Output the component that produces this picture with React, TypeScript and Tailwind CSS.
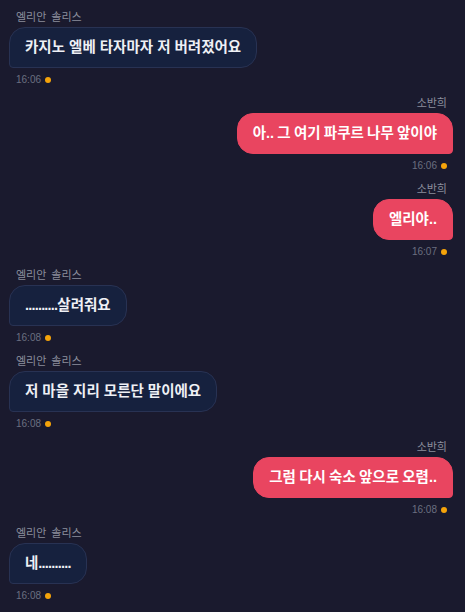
const messages = [
  { id: 1, mine: false, name: '엘리안  솔리스', text: '카지노 엘베 타자마자 저 버려졌어요', time: '16:06' },
  { id: 2, mine: true, name: '소반희', text: '아.. 그 여기 파쿠르 나무 앞이야', time: '16:06' },
  { id: 3, mine: true, name: '소반희', text: '엘리야..', time: '16:07' },
  { id: 4, mine: false, name: '엘리안  솔리스', text: '..........살려줘요', time: '16:08' },
  { id: 5, mine: false, name: '엘리안  솔리스', text: '저 마을 지리 모른단 말이에요', time: '16:08' },
  { id: 6, mine: true, name: '소반희', text: '그럼 다시 숙소 앞으로 오렴..', time: '16:08' },
  { id: 7, mine: false, name: '엘리안  솔리스', text: '네..........', time: '16:08' },
];

// runs of dots render narrower, like the original font
function BubbleText({ text }: { text: string }) {
  const parts = text.split(/(\.{3,})/);
  return (
    <>
      {parts.map((p, i) =>
        /^\.{3,}$/.test(p) ? (
          <span key={i} className="tracking-[-0.8px]">
            {p}
          </span>
        ) : (
          <span key={i}>{p}</span>
        )
      )}
    </>
  );
}

function Message({ mine, name, text, time }: { mine: boolean; name: string; text: string; time: string }) {
  return (
    <div className={mine ? 'flex flex-col items-end mb-[9px]' : 'flex flex-col items-start mb-[9px]'}>
      <div
        className={
          mine
            ? 'text-[11px] leading-[14px] text-[#8b8e9c] mr-[6px] mb-[4px] whitespace-pre'
            : 'text-[11px] leading-[14px] text-[#8b8e9c] ml-[7px] mb-[4px] whitespace-pre'
        }
      >
        {name}
      </div>
      <div
        className={
          mine
            ? "bg-[#e94560] border border-[#e94560] text-white rounded-[16px] rounded-br-[4px] px-[15px] py-[9px] text-[14.5px] leading-[21px] font-semibold [word-spacing:-0.8px] font-['Liberation_Sans','Noto_Sans_CJK_KR',sans-serif]"
            : "bg-[#16213e] border border-[#283253] text-[#eef0f5] rounded-[16px] rounded-bl-[4px] px-[15px] py-[9px] text-[14.5px] leading-[21px] font-semibold font-['Liberation_Sans','Noto_Sans_CJK_KR',sans-serif]"
        }
      >
        <BubbleText text={text} />
      </div>
      <div
        className={
          mine
            ? 'flex items-center gap-[4px] mt-[6px] mr-[6px] h-[12px]'
            : 'flex items-center gap-[4px] mt-[6px] ml-[7px] h-[12px]'
        }
      >
        <span className="text-[10px] leading-[12px] text-[#6b6f80] font-['Liberation_Sans',sans-serif]">{time}</span>
        <span className="w-[6px] h-[6px] rounded-full bg-[#f5a30a]" />
      </div>
    </div>
  );
}

export default function App() {
  return (
    <main className="min-h-screen bg-[#1a1a2e] pl-[9px] pr-[12px] pt-[9px] font-['Noto_Sans_CJK_KR','Noto_Sans',sans-serif]">
      {messages.map((m) => (
        <Message key={m.id} mine={m.mine} name={m.name} text={m.text} time={m.time} />
      ))}
    </main>
  );
}
